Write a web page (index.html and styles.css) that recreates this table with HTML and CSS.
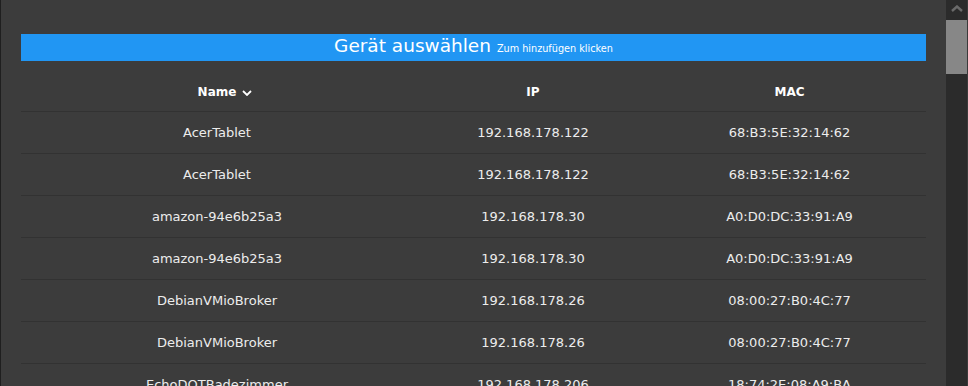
FILE: index.html
```html
<!DOCTYPE html>
<html lang="de">
<head>
<meta charset="utf-8">
<title>Gerät auswählen</title>
<link rel="stylesheet" href="styles.css">
</head>
<body>
<div class="app">
  <main class="panel">
    <div class="titlebar">Gerät auswählen <span class="subtitle">Zum hinzufügen klicken</span></div>
    <table class="devices">
      <colgroup>
        <col class="c-name">
        <col class="c-ip">
        <col class="c-mac">
      </colgroup>
      <thead>
        <tr>
          <th>Name<svg class="sort" width="10" height="6" viewBox="0 0 10 6"><path d="M1 1 L5 5 L9 1" fill="none" stroke="#fff" stroke-width="1.8"/></svg></th>
          <th>IP</th>
          <th>MAC</th>
        </tr>
      </thead>
      <tbody>
        <tr><td>AcerTablet</td><td>192.168.178.122</td><td>68:B3:5E:32:14:62</td></tr>
        <tr><td>AcerTablet</td><td>192.168.178.122</td><td>68:B3:5E:32:14:62</td></tr>
        <tr><td>amazon-94e6b25a3</td><td>192.168.178.30</td><td>A0:D0:DC:33:91:A9</td></tr>
        <tr><td>amazon-94e6b25a3</td><td>192.168.178.30</td><td>A0:D0:DC:33:91:A9</td></tr>
        <tr><td>DebianVMioBroker</td><td>192.168.178.26</td><td>08:00:27:B0:4C:77</td></tr>
        <tr><td>DebianVMioBroker</td><td>192.168.178.26</td><td>08:00:27:B0:4C:77</td></tr>
        <tr><td>EchoDOTBadezimmer</td><td>192.168.178.206</td><td>18:74:2E:08:A9:BA</td></tr>
        <tr><td>EchoDOTBadezimmer</td><td>192.168.178.206</td><td>18:74:2E:08:A9:BA</td></tr>
      </tbody>
    </table>
  </main>
  <div class="scrollbar">
    <div class="arrow"><svg width="12" height="7" viewBox="0 0 12 7"><path d="M1 6 L6 1.5 L11 6" fill="none" stroke="#6a6a6a" stroke-width="2.4"/></svg></div>
    <div class="thumb"></div>
    <div class="track"></div>
  </div>
  <div class="edge"></div>
</div>
</body>
</html>
```

FILE: styles.css
```css
html, body {
  margin: 0;
  padding: 0;
  height: 100%;
  overflow: hidden;
  background: #3c3c3c;
  font-family: "DejaVu Sans", "Liberation Sans", sans-serif;
}

.app {
  display: flex;
  height: 100vh;
  border-left: 1px solid #1f1f1f;
  box-sizing: border-box;
}

.panel {
  flex: 1;
  min-width: 0;
  overflow: hidden;
  padding: 34px 20px 0 20px;
}

.titlebar {
  height: 27px;
  box-sizing: border-box;
  padding-bottom: 4px;
  line-height: 23px;
  background: #2196f3;
  color: #fff;
  text-align: center;
  font-size: 18.5px;
  white-space: nowrap;
}

.subtitle {
  font-size: 9.7px;
}

.devices {
  width: 100%;
  margin-top: 9px;
  border-collapse: collapse;
  table-layout: fixed;
}

.c-name { width: 392px; }
.c-ip { width: 240px; }

.devices th,
.devices td {
  height: 41px;
  padding: 0;
  text-align: center;
  vertical-align: middle;
  border-bottom: 1px solid #323232;
  white-space: nowrap;
}

.devices th {
  font-size: 12px;
  font-weight: bold;
  color: #fff;
  padding-top: 2px;
  height: 39px;
}

.devices td {
  font-size: 13px;
  color: #ececec;
}

.sort {
  display: inline-block;
  vertical-align: 0;
  margin-left: 6px;
  margin-right: -16px;
}

.scrollbar {
  width: 21px;
  display: flex;
  flex-direction: column;
  background: #2b2b2b;
}

.arrow {
  height: 20px;
  display: flex;
  justify-content: center;
  align-items: flex-start;
  padding-top: 5px;
  box-sizing: border-box;
}

.thumb {
  height: 54px;
  background: #878787;
}

.track {
  flex: 1;
}

.edge {
  width: 1px;
  background: #3a3a3a;
}
```
